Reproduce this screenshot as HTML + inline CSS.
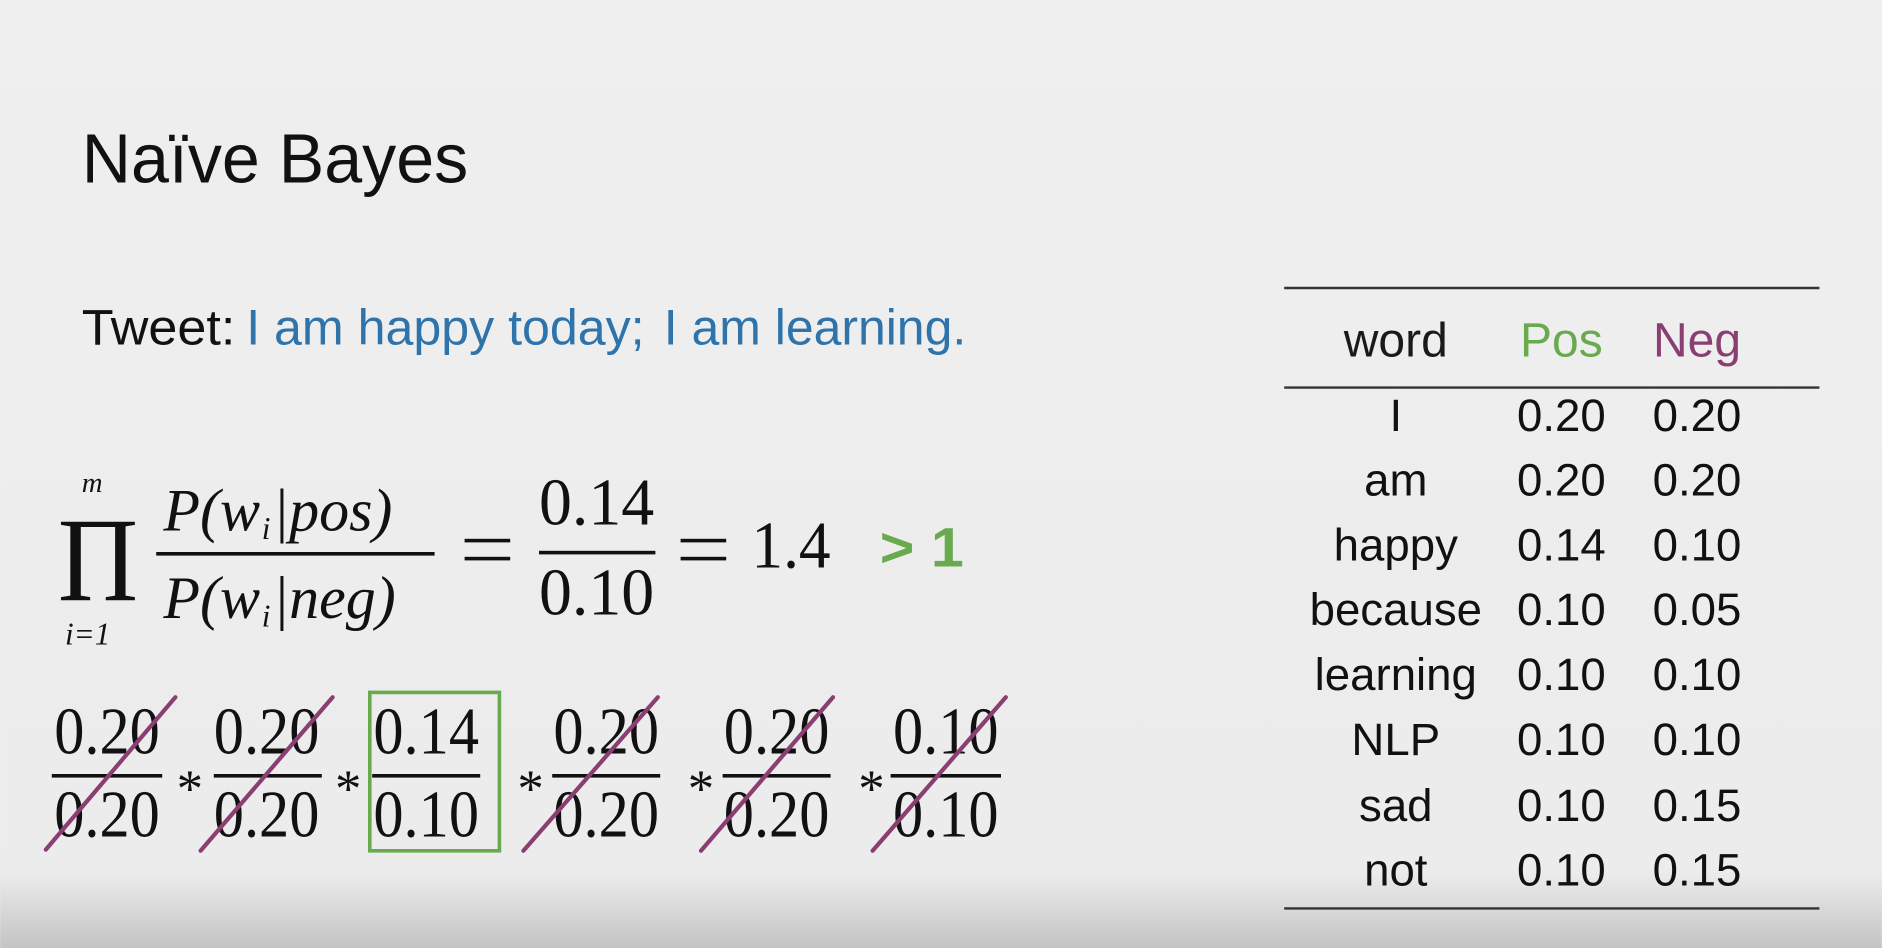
<!DOCTYPE html>
<html><head><meta charset="utf-8"><style>
html,body{margin:0;padding:0;width:1882px;height:948px;overflow:hidden;background:#eeeeee}
svg{display:block}
</style></head><body>
<svg width="1882" height="948" viewBox="0 0 1568 790" xmlns="http://www.w3.org/2000/svg">
<defs>
<linearGradient id="bg" x1="0" y1="0" x2="0" y2="1">
<stop offset="0" stop-color="#efefef"/>
<stop offset="0.92" stop-color="#ececec"/>
<stop offset="1" stop-color="#c4c4c4"/>
</linearGradient>
</defs>
<rect width="1568" height="790" fill="url(#bg)"/>
<g font-family="Liberation Sans, sans-serif">
<text x="68" y="152" font-size="58" fill="#111" textLength="322" lengthAdjust="spacingAndGlyphs">Naïve Bayes</text>
<text x="68" y="287" font-size="42" fill="#111" textLength="128" lengthAdjust="spacingAndGlyphs">Tweet:</text>
<text x="205" y="287" font-size="42" fill="#2f73ab" textLength="332" lengthAdjust="spacingAndGlyphs">I am happy today;</text>
<text x="553" y="287" font-size="42" fill="#2f73ab" textLength="252" lengthAdjust="spacingAndGlyphs">I am learning.</text>
<text x="733" y="472" font-size="46" font-weight="bold" fill="#6aaa4f" textLength="70" lengthAdjust="spacingAndGlyphs">&gt; 1</text>
</g>
<g stroke="#333" stroke-width="2">
<line x1="1070" y1="240" x2="1516" y2="240"/>
<line x1="1070" y1="323" x2="1516" y2="323"/>
<line x1="1070" y1="757" x2="1516" y2="757"/>
</g>
<g font-family="Liberation Sans, sans-serif" font-size="40" text-anchor="middle" fill="#1a1a1a">
<text x="1163" y="297">word</text>
<text x="1301" y="297" fill="#6aaa4f">Pos</text>
<text x="1414" y="297" fill="#8a3e72">Neg</text>
</g>
<g font-family="Liberation Sans, sans-serif" font-size="38" text-anchor="middle" fill="#111">
<text x="1163" y="359">I</text><text x="1301" y="359">0.20</text><text x="1414" y="359">0.20</text>
<text x="1163" y="413">am</text><text x="1301" y="413">0.20</text><text x="1414" y="413">0.20</text>
<text x="1163" y="467">happy</text><text x="1301" y="467">0.14</text><text x="1414" y="467">0.10</text>
<text x="1163" y="521">because</text><text x="1301" y="521">0.10</text><text x="1414" y="521">0.05</text>
<text x="1163" y="575">learning</text><text x="1301" y="575">0.10</text><text x="1414" y="575">0.10</text>
<text x="1163" y="629">NLP</text><text x="1301" y="629">0.10</text><text x="1414" y="629">0.10</text>
<text x="1163" y="684">sad</text><text x="1301" y="684">0.10</text><text x="1414" y="684">0.15</text>
<text x="1163" y="738">not</text><text x="1301" y="738">0.10</text><text x="1414" y="738">0.15</text>
</g>
<g font-family="Liberation Serif, serif" fill="#111">
<text x="48" y="500" font-size="100" textLength="67" lengthAdjust="spacingAndGlyphs">Π</text>
<text x="68" y="410" font-size="24" font-style="italic">m</text>
<text x="54" y="537" font-size="26" font-style="italic">i=1</text>
<text x="136" y="442" font-size="50" font-style="italic">P(w</text>
<text x="218" y="449" font-size="26" font-style="italic">i</text>
<text x="227" y="442" font-size="50" font-style="italic">|pos)</text>
<rect x="130" y="460" width="232" height="3"/>
<text x="136" y="515" font-size="50" font-style="italic">P(w</text>
<text x="218" y="522" font-size="26" font-style="italic">i</text>
<text x="227" y="515" font-size="50" font-style="italic">|neg)</text>
<rect x="387" y="449" width="38" height="3"/><rect x="387" y="464" width="38" height="3"/>
<text x="449" y="437" font-size="56" textLength="96" lengthAdjust="spacingAndGlyphs">0.14</text>
<rect x="449" y="459" width="97" height="3"/>
<text x="449" y="512" font-size="56" textLength="96" lengthAdjust="spacingAndGlyphs">0.10</text>
<rect x="567" y="449" width="38" height="3"/><rect x="567" y="464" width="38" height="3"/>
<text x="626" y="473" font-size="56" textLength="66" lengthAdjust="spacingAndGlyphs">1.4</text>
</g>
<g font-family="Liberation Serif, serif" fill="#111" font-size="56">
<text x="45" y="628" textLength="88" lengthAdjust="spacingAndGlyphs">0.20</text>
<rect x="43" y="645" width="92" height="3"/>
<text x="45" y="697" textLength="88" lengthAdjust="spacingAndGlyphs">0.20</text>
<text x="147" y="672" font-size="44">*</text>
<text x="178" y="628" textLength="88" lengthAdjust="spacingAndGlyphs">0.20</text>
<rect x="178" y="645" width="90" height="3"/>
<text x="178" y="697" textLength="88" lengthAdjust="spacingAndGlyphs">0.20</text>
<text x="279" y="672" font-size="44">*</text>
<text x="311" y="628" textLength="88" lengthAdjust="spacingAndGlyphs">0.14</text>
<rect x="310" y="645" width="90" height="3"/>
<text x="311" y="697" textLength="88" lengthAdjust="spacingAndGlyphs">0.10</text>
<text x="431" y="672" font-size="44">*</text>
<text x="461" y="628" textLength="88" lengthAdjust="spacingAndGlyphs">0.20</text>
<rect x="460" y="645" width="90" height="3"/>
<text x="461" y="697" textLength="88" lengthAdjust="spacingAndGlyphs">0.20</text>
<text x="573" y="672" font-size="44">*</text>
<text x="603" y="628" textLength="88" lengthAdjust="spacingAndGlyphs">0.20</text>
<rect x="602" y="645" width="90" height="3"/>
<text x="603" y="697" textLength="88" lengthAdjust="spacingAndGlyphs">0.20</text>
<text x="715" y="672" font-size="44">*</text>
<text x="744" y="628" textLength="88" lengthAdjust="spacingAndGlyphs">0.10</text>
<rect x="742" y="645" width="92" height="3"/>
<text x="744" y="697" textLength="88" lengthAdjust="spacingAndGlyphs">0.10</text>
</g>
<rect x="308" y="577" width="108" height="132" fill="none" stroke="#6aaa4f" stroke-width="3"/>
<g stroke="#8a3e72" stroke-width="3.5" stroke-linecap="round">
<line x1="38" y1="708" x2="146" y2="581"/>
<line x1="167" y1="709" x2="277" y2="581"/>
<line x1="436" y1="709" x2="548" y2="581"/>
<line x1="584" y1="709" x2="694" y2="581"/>
<line x1="727" y1="709" x2="838" y2="581"/>
</g>
</svg>
</body></html>
